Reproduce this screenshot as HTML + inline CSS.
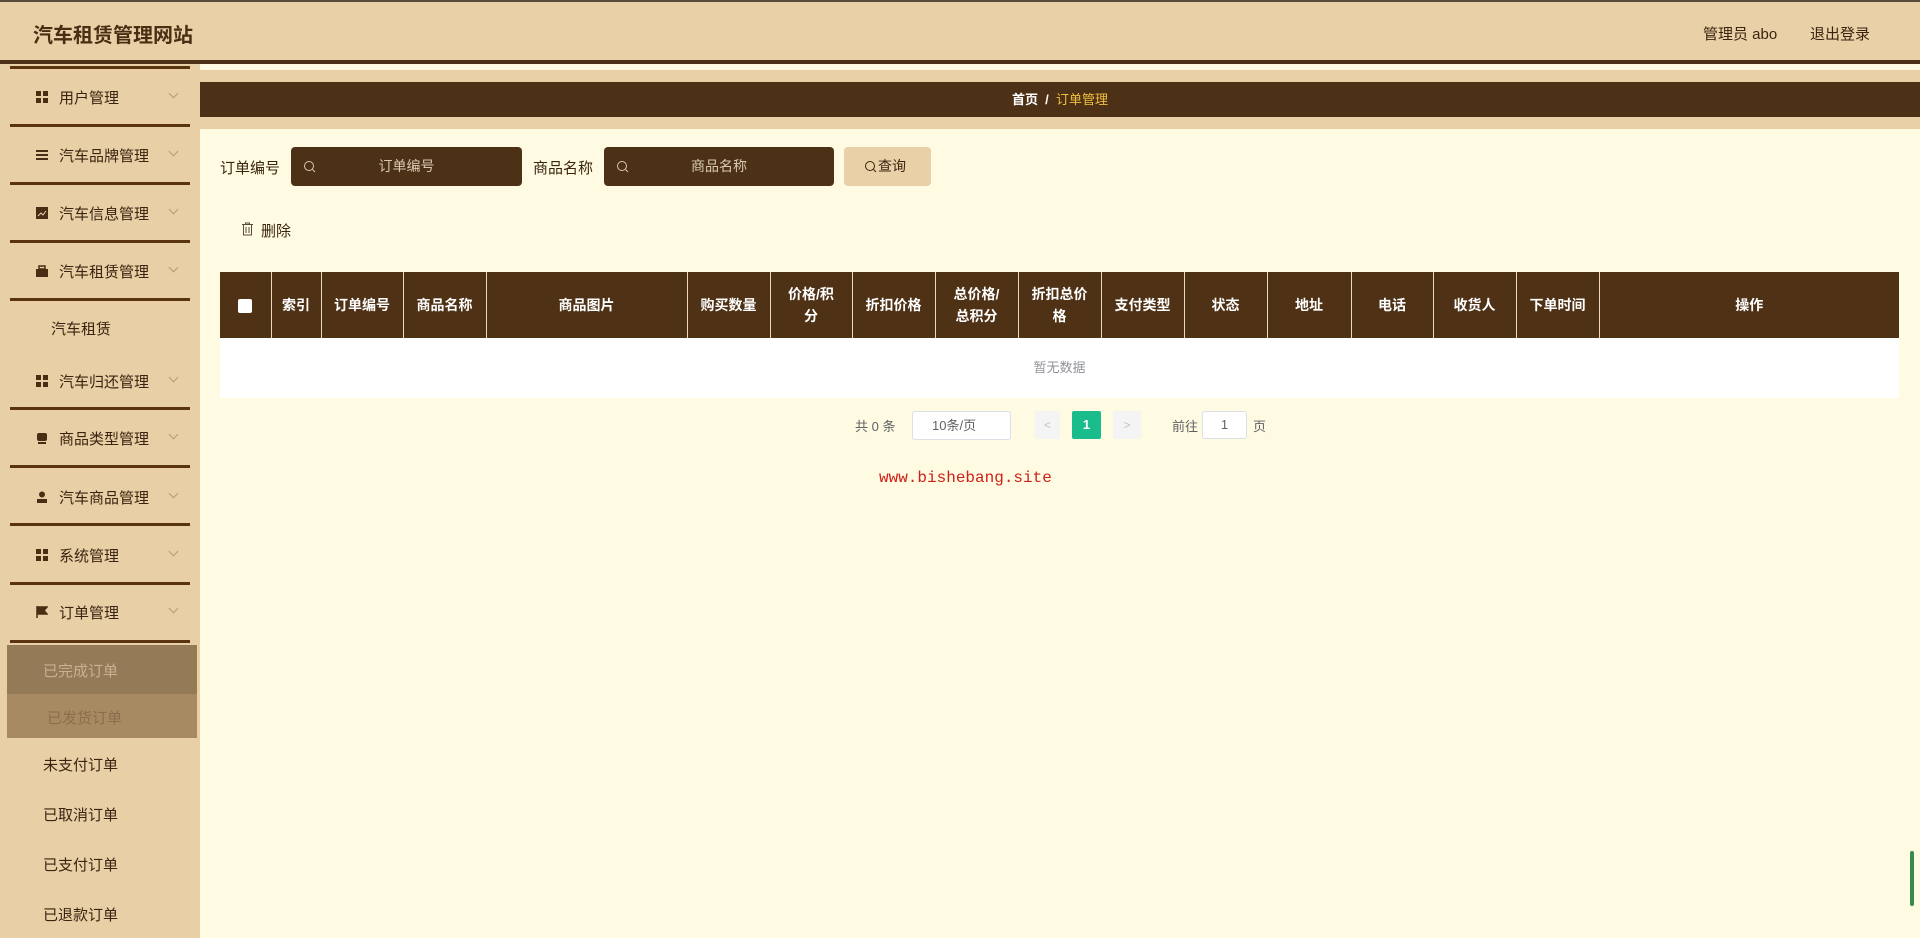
<!DOCTYPE html>
<html><head><meta charset="utf-8"><style>
*{margin:0;padding:0;box-sizing:border-box}
body{width:1920px;height:938px;overflow:hidden;background:#fffbe2;font-family:"Liberation Sans","Noto Sans CJK SC",sans-serif;color:#4a2e14;position:relative}
.a{position:absolute}
.hdr{left:0;top:0;width:1920px;height:60px;background:#e9d0a7;border-top:2px solid #5a4a3a}
.hline{left:0;top:60px;width:1920px;height:4px;background:#4d3117}
.side{left:0;top:64px;width:200px;height:874px;background:#e8cfa6}
.ln{left:10px;width:180px;height:3px;background:#5a3410}
.mi{left:0;width:200px;font-size:15px;color:#3a2410;display:flex;align-items:center;height:20px;margin-top:-10px}
.mi .ic{position:absolute;left:36px;width:12px;height:12px}
.mi .t{position:absolute;left:59px}
.mi .ch{position:absolute;left:170px;width:7px;height:7px;border-right:1px solid #b89a70;border-bottom:1px solid #b89a70;transform:rotate(45deg);top:3px}
.sub{font-size:15px;color:#3a2410;left:43px;margin-top:-10px}
th{background:#4f3216;color:#fff;font-size:14px;font-weight:bold;border-right:1px solid #e8d8c0;text-align:center;height:66px;line-height:22px;padding:0 12px}
table{border-collapse:collapse;table-layout:fixed}
</style></head><body>
<div class="a hdr"></div>
<div class="a" style="left:33px;top:19px;font-size:20px;font-weight:bold;color:#4a2e14">汽车租赁管理网站</div>
<div class="a" style="left:1703px;top:23px;font-size:15px;color:#3a2410">管理员 abo</div>
<div class="a" style="left:1810px;top:23px;font-size:15px;color:#3a2410">退出登录</div>
<div class="a hline"></div>
<div class="a side"></div>
<div class="a ln" style="top:66px"></div>
<div class="a ln" style="top:124px"></div>
<div class="a ln" style="top:182px"></div>
<div class="a ln" style="top:240px"></div>
<div class="a ln" style="top:298px"></div>
<div class="a ln" style="top:407px"></div>
<div class="a ln" style="top:465px"></div>
<div class="a ln" style="top:523px"></div>
<div class="a ln" style="top:582px"></div>
<div class="a ln" style="top:640px"></div>

<div class="a mi" style="top:97px"><svg class="ic" viewBox="0 0 12 12"><rect x="0" y="0" width="5" height="5" fill="#4a2e14"/><rect x="7" y="0" width="5" height="5" fill="#4a2e14"/><rect x="0" y="7" width="5" height="5" fill="#4a2e14"/><rect x="7" y="7" width="5" height="5" fill="#4a2e14"/></svg><span class="t">用户管理</span><span class="ch"></span></div>
<div class="a mi" style="top:155px"><svg class="ic" viewBox="0 0 12 12"><rect x="0" y="1" width="12" height="2" fill="#4a2e14"/><rect x="0" y="5" width="12" height="2" fill="#4a2e14"/><rect x="0" y="9" width="12" height="2" fill="#4a2e14"/></svg><span class="t">汽车品牌管理</span><span class="ch"></span></div>
<div class="a mi" style="top:213px"><svg class="ic" viewBox="0 0 12 12"><rect width="12" height="12" fill="#4a2e14"/><path d="M2 9L5 6L7 8L10 4" stroke="#e8cfa6" fill="none"/></svg><span class="t">汽车信息管理</span><span class="ch"></span></div>
<div class="a mi" style="top:271px"><svg class="ic" viewBox="0 0 12 12"><rect x="0" y="4" width="12" height="8" fill="#4a2e14"/><rect x="3" y="1" width="6" height="3" fill="none" stroke="#4a2e14" stroke-width="1.5"/></svg><span class="t">汽车租赁管理</span><span class="ch"></span></div>
<div class="a sub" style="top:328px;left:51px">汽车租赁</div>
<div class="a mi" style="top:381px"><svg class="ic" viewBox="0 0 12 12"><rect x="0" y="0" width="5" height="5" fill="#4a2e14"/><rect x="7" y="0" width="5" height="5" fill="#4a2e14"/><rect x="0" y="7" width="5" height="5" fill="#4a2e14"/><rect x="7" y="7" width="5" height="5" fill="#4a2e14"/></svg><span class="t">汽车归还管理</span><span class="ch"></span></div>
<div class="a mi" style="top:438px"><svg class="ic" viewBox="0 0 12 12"><rect x="1" y="1" width="10" height="8" rx="2" fill="#4a2e14"/><rect x="2" y="10" width="8" height="2" fill="#4a2e14"/></svg><span class="t">商品类型管理</span><span class="ch"></span></div>
<div class="a mi" style="top:497px"><svg class="ic" viewBox="0 0 12 12"><circle cx="6" cy="3.5" r="3" fill="#4a2e14"/><rect x="1" y="8" width="10" height="4" fill="#4a2e14"/></svg><span class="t">汽车商品管理</span><span class="ch"></span></div>
<div class="a mi" style="top:555px"><svg class="ic" viewBox="0 0 12 12"><rect x="0" y="0" width="5" height="5" fill="#4a2e14"/><rect x="7" y="0" width="5" height="5" fill="#4a2e14"/><rect x="0" y="7" width="5" height="5" fill="#4a2e14"/><rect x="7" y="7" width="5" height="5" fill="#4a2e14"/></svg><span class="t">系统管理</span><span class="ch"></span></div>
<div class="a mi" style="top:612px"><svg class="ic" viewBox="0 0 12 12"><path d="M1 0V12M1 1H11L8 4.5L11 8H1" fill="#4a2e14" stroke="#4a2e14" stroke-width="1.5"/></svg><span class="t">订单管理</span><span class="ch"></span></div>

<div class="a" style="left:7px;top:645px;width:190px;height:49px;background:#957a58"></div>
<div class="a" style="left:7px;top:694px;width:190px;height:44px;background:#a88a62"></div>
<div class="a sub" style="top:670px;color:#c8b090">已完成订单</div>
<div class="a sub" style="top:717px;color:#8a6e4c;left:47px">已发货订单</div>
<div class="a sub" style="top:764px">未支付订单</div>
<div class="a sub" style="top:814px">已取消订单</div>
<div class="a sub" style="top:864px">已支付订单</div>
<div class="a sub" style="top:914px">已退款订单</div>

<div class="a" style="left:200px;top:70px;width:1720px;height:12px;background:#e9d0a7"></div>
<div class="a" style="left:200px;top:82px;width:1720px;height:35px;background:#4d3117;text-align:center;line-height:35px;font-size:13px;font-weight:bold;color:#fff">首页 &nbsp;/&nbsp; <span style="color:#f0c040;font-weight:normal">订单管理</span></div>
<div class="a" style="left:200px;top:117px;width:1720px;height:12px;background:#e9d0a7"></div>

<div class="a" style="left:220px;top:157px;font-size:15px;color:#3a2410">订单编号</div>
<div class="a" style="left:291px;top:147px;width:231px;height:39px;background:#4d3117;border-radius:4px;color:#d8c8b0;font-size:14px;line-height:39px;text-align:center">订单编号<svg class="a" style="left:12px;top:13px" width="13" height="13" viewBox="0 0 13 13"><circle cx="6" cy="6" r="4.5" stroke="#d8c8b0" fill="none"/><path d="M9.5 9.5L12 12" stroke="#d8c8b0"/></svg></div>
<div class="a" style="left:533px;top:157px;font-size:15px;color:#3a2410">商品名称</div>
<div class="a" style="left:604px;top:147px;width:230px;height:39px;background:#4d3117;border-radius:4px;color:#d8c8b0;font-size:14px;line-height:39px;text-align:center">商品名称<svg class="a" style="left:12px;top:13px" width="13" height="13" viewBox="0 0 13 13"><circle cx="6" cy="6" r="4.5" stroke="#d8c8b0" fill="none"/><path d="M9.5 9.5L12 12" stroke="#d8c8b0"/></svg></div>
<div class="a" style="left:844px;top:147px;width:87px;height:39px;background:#e9d0a7;border-radius:4px;font-size:14px;line-height:39px;color:#3a2410;padding-left:34px">查询<svg class="a" style="left:20px;top:13px" width="13" height="13" viewBox="0 0 13 13"><circle cx="6" cy="6" r="4.5" stroke="#3a2410" fill="none"/><path d="M9.5 9.5L12 12" stroke="#3a2410"/></svg></div>

<svg class="a" style="left:241px;top:222px" width="13" height="14" viewBox="0 0 13 14"><path d="M1 2.5H12M4.5 2.5V1H8.5V2.5M2.5 2.5V13H10.5V2.5M5 5V11M8 5V11" stroke="#5a4a3a" fill="none"/></svg>
<div class="a" style="left:261px;top:220px;font-size:15px;color:#3a2410">删除</div>

<table class="a" style="left:220px;top:272px;width:1679px">
<colgroup><col style="width:51px"><col style="width:50px"><col style="width:82px"><col style="width:83px"><col style="width:201px"><col style="width:83px"><col style="width:82px"><col style="width:83px"><col style="width:83px"><col style="width:83px"><col style="width:83px"><col style="width:83px"><col style="width:84px"><col style="width:82px"><col style="width:83px"><col style="width:83px"><col></colgroup>
<tr><th style="padding:0"><span style="display:inline-block;width:14px;height:14px;background:#fff;border-radius:2px;vertical-align:middle"></span></th><th style="padding:0">索引</th><th style="padding:0">订单编号</th><th>商品名称</th><th>商品图片</th><th>购买数量</th><th>价格/积分</th><th>折扣价格</th><th>总价格/总积分</th><th>折扣总价格</th><th>支付类型</th><th>状态</th><th>地址</th><th>电话</th><th>收货人</th><th style="padding:0">下单时间</th><th style="border-right:none">操作</th></tr>
</table>
<div class="a" style="left:220px;top:338px;width:1679px;height:60px;background:#fff;text-align:center;line-height:60px;font-size:13px;color:#909399">暂无数据</div>

<div class="a" style="left:855px;top:416px;font-size:13px;color:#606266">共 0 条</div>
<div class="a" style="left:912px;top:411px;width:99px;height:29px;background:#fff;border:1px solid #dcdfe6;border-radius:3px;font-size:13px;color:#606266;line-height:27px;padding-left:19px">10条/页</div>
<div class="a" style="left:1035px;top:411px;width:25px;height:28px;background:#f4f4f5;color:#c0c4cc;text-align:center;line-height:28px;font-size:12px">&lt;</div>
<div class="a" style="left:1072px;top:411px;width:29px;height:28px;background:#1abc8c;color:#fff;text-align:center;line-height:28px;font-size:13px;font-weight:bold;border-radius:2px">1</div>
<div class="a" style="left:1113px;top:411px;width:28px;height:28px;background:#f4f4f5;color:#c0c4cc;text-align:center;line-height:28px;font-size:12px">&gt;</div>
<div class="a" style="left:1172px;top:416px;font-size:13px;color:#606266">前往</div>
<div class="a" style="left:1202px;top:411px;width:45px;height:28px;background:#fff;border:1px solid #dcdfe6;border-radius:3px;text-align:center;line-height:26px;font-size:13px;color:#606266">1</div>
<div class="a" style="left:1253px;top:416px;font-size:13px;color:#606266">页</div>

<div class="a" style="left:879px;top:469px;font-family:'Liberation Mono',monospace;font-size:16px;color:#d0201a">www.bishebang.site</div>
<div class="a" style="left:1910px;top:851px;width:4px;height:55px;background:#3a8a50;border-radius:2px"></div>
</body></html>
